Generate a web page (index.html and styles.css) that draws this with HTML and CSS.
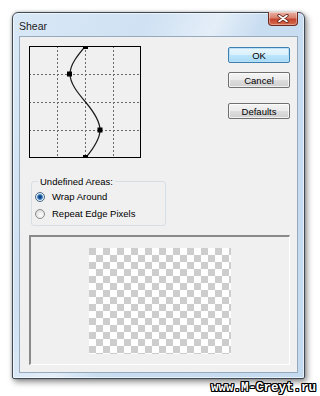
FILE: index.html
```html
<!DOCTYPE html>
<html>
<head>
<meta charset="utf-8">
<link rel="stylesheet" href="styles.css">
</head>
<body>
<div class="window">
  <div class="titlebar">
    <span class="title">Shear</span>
    <div class="close">
      <svg width="12" height="9" viewBox="0 0 12 9"><path d="M2 1.5 L10 7.5 M10 1.5 L2 7.5" stroke="#5a1b12" stroke-width="3.2" stroke-linecap="round"/><path d="M2 1.5 L10 7.5 M10 1.5 L2 7.5" stroke="#fff" stroke-width="1.6" stroke-linecap="round"/></svg>
    </div>
  </div>
  <div class="client">
    <div class="top">
      <div class="leftcol">
        <svg class="graph" width="112" height="112" viewBox="0 0 112 112">
          <rect x="0" y="0" width="112" height="112" fill="#f0f0f0"/>
          <g stroke="#6a6a6a" stroke-width="1" stroke-dasharray="2 2">
            <path d="M28.5 0 V112 M56.5 0 V112 M84.5 0 V112 M0 28.5 H112 M0 56.5 H112 M0 84.5 H112"/>
          </g>
          <path d="M56.5 0 C48.6 9.3 41 18.7 41 28 C41 37.3 48.6 46.7 56.5 56 C64.3 65.3 71 74.7 71 84 C71 93.3 64.3 102.7 56.5 112" fill="none" stroke="#1a1a1a" stroke-width="1.2"/>
          <rect x="0.5" y="0.5" width="111" height="111" fill="none" stroke="#000"/>
          <rect x="54" y="0" width="5" height="3" fill="#000"/>
          <rect x="38" y="25.5" width="5" height="5" fill="#000"/>
          <rect x="68.5" y="81.5" width="5" height="5" fill="#000"/>
          <rect x="54" y="109" width="5" height="3" fill="#000"/>
        </svg>
        <fieldset class="group">
          <legend>Undefined Areas:</legend>
          <div class="radio-row"><span class="radio checked"></span><span>Wrap Around</span></div>
          <div class="radio-row"><span class="radio"></span><span>Repeat Edge Pixels</span></div>
        </fieldset>
      </div>
      <div class="buttons">
        <div class="btn default">OK</div>
        <div class="btn">Cancel</div>
        <div class="btn defaults">Defaults</div>
      </div>
    </div>
    <div class="preview">
      <div class="checker"></div>
    </div>
  </div>
</div>
<div class="watermark">www.M-Creyt.ru</div>
</body>
</html>
```
FILE: styles.css
```css
html, body {
  margin: 0;
  padding: 0;
  background: #ffffff;
}
body {
  font-family: "Liberation Sans", Arial, sans-serif;
  width: 320px;
  height: 396px;
  overflow: hidden;
}
.window {
  margin: 12px 0 0 12px;
  width: 293px;
  height: 367px;
  box-sizing: border-box;
  border: 1px solid #3f4a57;
  border-radius: 6px 6px 2px 2px;
  background: linear-gradient(115deg, #d9e8f6 0%, #cfe1f3 30%, #e4eef8 45%, #c9ddf1 55%, #c4daef 100%);
  box-shadow: 2px 3px 6px rgba(0,0,0,0.45), 0 0 3px rgba(0,0,0,0.25), inset 0 0 0 1px rgba(255,255,255,0.6);
  display: flex;
  flex-direction: column;
  padding: 0 6px 5px 6px;
}
.titlebar {
  height: 23px;
  display: flex;
  justify-content: space-between;
  align-items: flex-start;
}
.title {
  font-size: 10.5px;
  color: #1b1b1b;
  margin-top: 7px;
  margin-left: 0;
}
.close {
  width: 30px;
  height: 14px;
  margin-top: -1px;
  box-sizing: border-box;
  border: 1px solid #6e2a20;
  border-top: none;
  border-radius: 0 0 4px 4px;
  background: linear-gradient(#eab3a5 0%, #d9826e 45%, #c5452f 55%, #d56a4e 100%);
  display: flex;
  align-items: center;
  justify-content: center;
  box-shadow: inset 0 0 0 1px rgba(255,255,255,0.35);
}
.close svg { display: block; }
.client {
  height: 337px;
  box-sizing: border-box;
  border: 1px solid #97a9bc;
  background: #f0f0f0;
  padding: 9px 7px 7px 9px;
  display: flex;
  flex-direction: column;
}
.top {
  display: flex;
  justify-content: space-between;
}
.leftcol {
  display: flex;
  flex-direction: column;
}
.graph { display: block; }
.group {
  margin: 18px 0 0 2px;
  width: 135px;
  height: 50px;
  box-sizing: border-box;
  border: 1px solid #d5dfe5;
  border-radius: 3px;
  padding: 1px 4px 3px 4px;
  font-size: 9.5px;
  color: #000;
}
.group legend {
  padding: 0 2px;
  margin-left: 2px;
  line-height: 11px;
}
.radio-row {
  height: 17px;
  display: flex;
  align-items: center;
  gap: 7px;
}
.radio {
  width: 8px;
  height: 8px;
  border-radius: 50%;
  border: 1px solid #8a8c8e;
  background: radial-gradient(circle at 60% 65%, #ffffff 0%, #e8e8e8 50%, #c9c9c9 100%);
  box-sizing: content-box;
  margin-left: -1px;
  position: relative;
}
.radio.checked {
  background: radial-gradient(circle at 50% 50%, #0d2e63 0%, #1d5ea6 30%, #4f8ec9 45%, #e8eef4 60%, #d4d8dc 100%);
  border-color: #4c6a89;
}
.buttons {
  display: flex;
  flex-direction: column;
  margin-top: 1px;
}
.btn {
  width: 62px;
  height: 16px;
  box-sizing: border-box;
  border: 1px solid #707070;
  border-radius: 2px;
  background: linear-gradient(#f4f4f4 0%, #ebebeb 48%, #dddddd 52%, #cfcfcf 100%);
  box-shadow: inset 0 0 0 1px rgba(255,255,255,0.7);
  font-size: 9.5px;
  color: #000;
  display: flex;
  align-items: center;
  justify-content: center;
  margin-bottom: 9px;
}
.btn.default {
  border-color: #3c7fb1;
  background: linear-gradient(#eaf6fd 0%, #d9f0fc 48%, #bee6fd 52%, #a7d9f5 100%);
  box-shadow: inset 0 0 0 1px #b9e0f5;
}
.btn.defaults {
  margin-top: 6px;
}
.preview {
  margin-top: 9px;
  width: 261px;
  height: 130px;
  box-sizing: border-box;
  border-style: solid;
  border-width: 2px 1px 1px 2px;
  border-color: #8a8a8a #ffffff #ffffff #8a8a8a;
  display: flex;
  align-items: center;
  justify-content: center;
}
.checker {
  width: 142px;
  height: 106px;
  background: repeating-conic-gradient(#ffffff 0 25%, #cdcdcd 0 50%) 0 0 / 14px 14px;
}
.watermark {
  text-align: right;
  padding-right: 4px;
  margin-top: 3px;
  font-family: "Liberation Mono", "DejaVu Sans Mono", monospace;
  font-weight: bold;
  font-size: 12.5px;
  line-height: 12px;
  color: #ffffff;
  text-shadow: 1px 0 0 #000, -1px 0 0 #000, 0 1px 0 #000, 0 -1px 0 #000, 1px 1px 0 #000, -1px -1px 0 #000, 1px -1px 0 #000, -1px 1px 0 #000;
}
```
